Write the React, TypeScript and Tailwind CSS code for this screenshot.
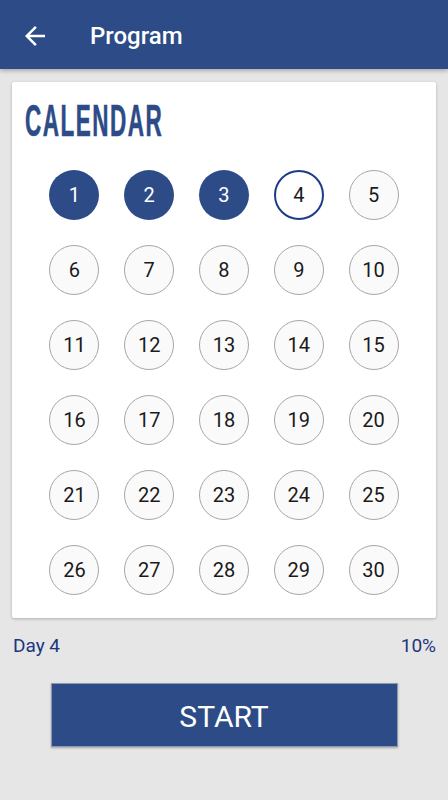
import { useState } from "react";

const DAYS = Array.from({ length: 30 }, (_, i) => i + 1);

export default function App() {
  const [current] = useState(4);

  return (
    <div className="min-h-[800px] w-[448px] bg-[#e6e6e6] font-['Roboto',sans-serif]">
      <header className="relative z-10 flex h-[69px] items-center bg-[#2c4b87] pt-[2px] shadow-[0_2px_4px_rgba(0,0,0,0.25)]">
        <button className="ml-[20px] flex h-[30px] w-[30px] items-center justify-center text-white">
          <svg viewBox="0 0 24 24" className="h-[30px] w-[30px]" fill="currentColor">
            <path d="M20 11H7.83l5.59-5.59L12 4l-8 8 8 8 1.41-1.41L7.83 13H20v-2z" />
          </svg>
        </button>
        <h1 className="ml-[40px] pt-[1px] text-[24px] font-medium text-white">Program</h1>
      </header>

      <main className="px-[12px] pt-[13px]">
        <section className="rounded-[2px] bg-white px-[13px] pb-[11px] pt-[14px] shadow-[0_1px_3px_rgba(0,0,0,0.25)]">
          <h2 className="h-[50px] origin-left scale-x-[0.5] font-['Liberation_Sans',sans-serif] text-[45px] font-bold leading-[50px] tracking-[3px] text-[#2c4b87] [-webkit-text-stroke:0.6px_#2c4b87]">
            CALENDAR
          </h2>
          <div className="mt-[11px] grid grid-cols-5 px-[12px]">
            {DAYS.map((day) => (
              <div key={day} className="flex h-[75px] items-center justify-center">
                <DayCircle day={day} current={current} />
              </div>
            ))}
          </div>
        </section>

        <div className="mt-[15px] flex items-center justify-between text-[19px] leading-[26px] text-[#1c3580]">
          <span className="pl-[1px]">Day 4</span>
          <span>10%</span>
        </div>

        <div className="mt-[24px] flex justify-center">
          <button className="h-[64px] w-[347px] border border-[#8c9ab3] bg-[#2c4b87] pt-[3px] text-[30px] text-white shadow-[0_1px_2px_rgba(0,0,0,0.3)]">
            START
          </button>
        </div>
      </main>
    </div>
  );
}

function DayCircle({ day, current }: { day: number; current: number }) {
  if (day < current) {
    return (
      <span className="flex h-[50px] w-[50px] items-center justify-center rounded-full bg-[#2c4b87] text-[20px] text-white">
        {day}
      </span>
    );
  }
  if (day === current) {
    return (
      <span className="flex h-[50px] w-[50px] items-center justify-center rounded-full border-2 border-[#1d3c88] bg-white text-[20px] text-[#1a1a1a]">
        {day}
      </span>
    );
  }
  return (
    <span className="flex h-[50px] w-[50px] items-center justify-center rounded-full border border-[#a6a6a6] bg-[#fafafa] text-[20px] text-[#1a1a1a]">
      {day}
    </span>
  );
}
